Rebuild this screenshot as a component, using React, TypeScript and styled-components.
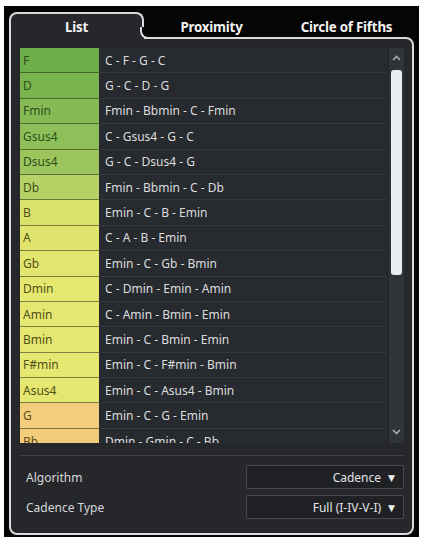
import React from "react";
import styled, { createGlobalStyle, css } from "styled-components";

const Global = createGlobalStyle`
  html, body { margin: 0; padding: 0; background: #ffffff; }
  body { font-family: "Noto Sans", "DejaVu Sans", sans-serif; }
  * { box-sizing: border-box; }
`;

const Page = styled.div`
  width: 421px;
  height: 540px;
  padding: 6px 2px 3px 4px;
  background: #ffffff;
`;

const Frame = styled.div`
  width: 415px;
  height: 531px;
  background: #050505;
  padding: 6px 5px 2px 5px;
  display: flex;
  flex-direction: column;
`;

const TabRow = styled.div`
  display: flex;
  height: 30px;
  position: relative;
  z-index: 2;
  margin-bottom: -2px;
`;

const Tab = styled.div<{ $active?: boolean }>`
  position: relative;
  width: 135px;
  display: flex;
  align-items: center;
  justify-content: center;
  font-size: 13.3px;
  font-weight: 700;
  letter-spacing: -0.2px;
  color: #f2f2f2;
  background: ${(p) => (p.$active ? "#25272b" : "transparent")};
  border: ${(p) => (p.$active ? "2px solid #d9dadb" : "2px solid transparent")};
  border-bottom: none;
  border-radius: 8px 8px 0 0;
  ${(p) =>
    p.$active &&
    css`
      &::before {
        content: "";
        position: absolute;
        right: -2px;
        bottom: 0;
        width: 2px;
        height: 8px;
        background: #25272b;
        z-index: 1;
      }
      &::after {
        content: "";
        position: absolute;
        right: -10px;
        bottom: 0;
        width: 10px;
        height: 10px;
        border-left: 2px solid #d9dadb;
        border-bottom: 2px solid #d9dadb;
        border-bottom-left-radius: 8px;
        background: #050505;
        z-index: 2;
      }
    `}
`;

const Panel = styled.div`
  flex: 1;
  background: #25272b;
  border: 2px solid #d9dadb;
  border-radius: 0 8px 8px 8px;
  padding: 9px 8px 8px 9px;
  display: flex;
  flex-direction: column;
`;

const ListArea = styled.div`
  display: flex;
  height: 395px;
  gap: 2px;
`;

const Rows = styled.div`
  flex: 1;
  overflow: hidden;
  display: grid;
  grid-auto-rows: 25.4px;
  align-content: start;
`;

const Row = styled.div`
  display: grid;
  grid-template-columns: 79px 1fr;
`;

const ChordCell = styled.div<{ $bg: string; $fg: string }>`
  background: ${(p) => p.$bg};
  color: ${(p) => p.$fg};
  font-size: 12px;
  display: flex;
  align-items: center;
  padding-left: 3px;
  border-bottom: 1px solid rgba(40, 45, 20, 0.55);
`;

const ProgCell = styled.div`
  background: #272a2e;
  color: #dcdddf;
  font-size: 12px;
  display: flex;
  align-items: center;
  padding-left: 6px;
  border-bottom: 1px solid #34373b;
`;

const Scrollbar = styled.div`
  width: 15px;
  background: #303337;
  display: flex;
  flex-direction: column;
  align-items: center;
  padding: 3px 0 4px;
`;

const ArrowBtn = styled.div`
  height: 14px;
  display: flex;
  align-items: center;
  justify-content: center;
`;

const Track = styled.div`
  flex: 1;
  width: 100%;
  padding: 5px 2px 2px;
`;

const Thumb = styled.div`
  width: 11px;
  height: 205px;
  background: #e9edf0;
  border-radius: 3px;
`;

const Divider = styled.div`
  height: 1px;
  background: #3c3f43;
  margin: 12px 0 9px;
`;

const SettingRow = styled.div`
  display: flex;
  align-items: center;
  justify-content: space-between;
  height: 24px;
  margin-bottom: 6px;
  padding-left: 6px;
`;

const Label = styled.span`
  color: #d6d7d9;
  font-size: 12px;
`;

const Select = styled.div`
  width: 158px;
  height: 24px;
  border: 1px solid #45484c;
  background: #1f2124;
  border-radius: 2px;
  display: flex;
  align-items: center;
  justify-content: flex-end;
  gap: 7px;
  padding-right: 8px;
  color: #e2e3e5;
  font-size: 12px;
`;

const Caret = styled.span`
  font-size: 9px;
  color: #f0f0f0;
`;

type Item = { chord: string; prog: string; bg: string; fg: string };

const G1 = "#2d4f1a";
const Y1 = "#4f5119";
const O1 = "#5e4a18";

const items: Item[] = [
  { chord: "F", prog: "C - F - G - C", bg: "#6faf4b", fg: G1 },
  { chord: "D", prog: "G - C - D - G", bg: "#78b34e", fg: G1 },
  { chord: "Fmin", prog: "Fmin - Bbmin - C - Fmin", bg: "#86ba55", fg: G1 },
  { chord: "Gsus4", prog: "C - Gsus4 - G - C", bg: "#8fbf59", fg: G1 },
  { chord: "Dsus4", prog: "G - C - Dsus4 - G", bg: "#9cc55d", fg: G1 },
  { chord: "Db", prog: "Fmin - Bbmin - C - Db", bg: "#b6d266", fg: "#3f5019" },
  { chord: "B", prog: "Emin - C - B - Emin", bg: "#dbe26b", fg: Y1 },
  { chord: "A", prog: "C - A - B - Emin", bg: "#e0e46d", fg: Y1 },
  { chord: "Gb", prog: "Emin - C - Gb - Bmin", bg: "#e3e66e", fg: Y1 },
  { chord: "Dmin", prog: "C - Dmin - Emin - Amin", bg: "#e5e76f", fg: Y1 },
  { chord: "Amin", prog: "C - Amin - Bmin - Emin", bg: "#e6e770", fg: Y1 },
  { chord: "Bmin", prog: "Emin - C - Bmin - Emin", bg: "#e6e770", fg: Y1 },
  { chord: "F#min", prog: "Emin - C - F#min - Bmin", bg: "#e6e770", fg: Y1 },
  { chord: "Asus4", prog: "Emin - C - Asus4 - Bmin", bg: "#e6e770", fg: Y1 },
  { chord: "G", prog: "Emin - C - G - Emin", bg: "#f2cd7b", fg: O1 },
  { chord: "Bb", prog: "Dmin - Gmin - C - Bb", bg: "#f2cc7a", fg: O1 },
];

const Chevron = ({ up }: { up?: boolean }) => (
  <svg width="9" height="6" viewBox="0 0 9 6">
    <path
      d={up ? "M1 5 L4.5 1.5 L8 5" : "M1 1 L4.5 4.5 L8 1"}
      fill="none"
      stroke="#a9acb0"
      strokeWidth="1.6"
    />
  </svg>
);

export default function App() {
  return (
    <Page>
      <Global />
      <Frame>
        <TabRow>
          <Tab $active>List</Tab>
          <Tab>Proximity</Tab>
          <Tab>Circle of Fifths</Tab>
        </TabRow>
        <Panel>
          <ListArea>
            <Rows>
              {items.map((it) => (
                <Row key={it.chord}>
                  <ChordCell $bg={it.bg} $fg={it.fg}>
                    {it.chord}
                  </ChordCell>
                  <ProgCell>{it.prog}</ProgCell>
                </Row>
              ))}
            </Rows>
            <Scrollbar>
              <ArrowBtn>
                <Chevron up />
              </ArrowBtn>
              <Track>
                <Thumb />
              </Track>
              <ArrowBtn>
                <Chevron />
              </ArrowBtn>
            </Scrollbar>
          </ListArea>
          <Divider />
          <SettingRow>
            <Label>Algorithm</Label>
            <Select>
              Cadence <Caret>▼</Caret>
            </Select>
          </SettingRow>
          <SettingRow>
            <Label>Cadence Type</Label>
            <Select>
              Full (I-IV-V-I) <Caret>▼</Caret>
            </Select>
          </SettingRow>
        </Panel>
      </Frame>
    </Page>
  );
}
